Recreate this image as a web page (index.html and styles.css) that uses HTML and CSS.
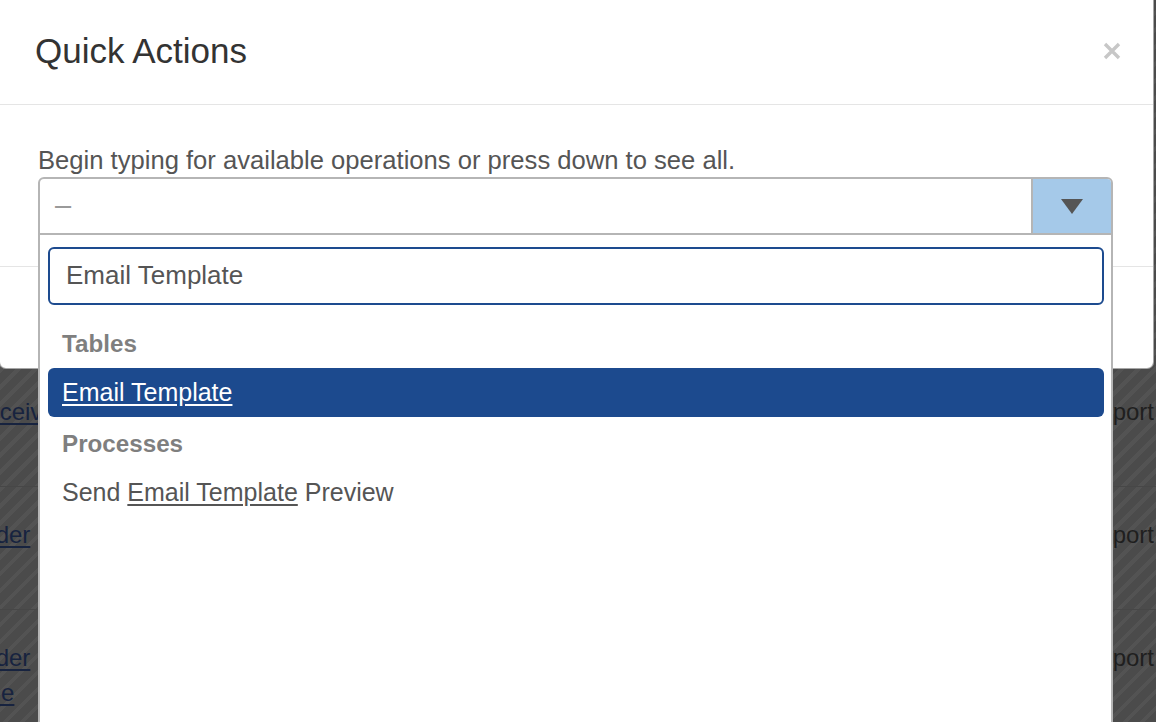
FILE: index.html
```html
<!DOCTYPE html>
<html>
<head>
<meta charset="utf-8">
<title>Quick Actions</title>
<link rel="stylesheet" href="styles.css">
</head>
<body>
<div class="page">
  <div class="row">
    <div class="cell c-left"><a href="#">Receiving</a></div>
    <div class="cell c-mid"></div>
    <div class="cell c-right">Import</div>
  </div>
  <div class="row">
    <div class="cell c-left"><a href="#">Order</a></div>
    <div class="cell c-mid"></div>
    <div class="cell c-right">Import</div>
  </div>
  <div class="row">
    <div class="cell c-left"><a href="#">Order Line</a></div>
    <div class="cell c-mid"></div>
    <div class="cell c-right">Import</div>
  </div>
</div>

<div class="modal">
  <div class="modal-header">
    <h4 class="modal-title">Quick Actions</h4>
    <button class="close" type="button" aria-label="Close">
      <svg width="18" height="18" viewBox="0 0 18 18"><path d="M2 2 L16 16 M16 2 L2 16" stroke="#c7c7c7" stroke-width="3.4" stroke-linecap="butt"/></svg>
    </button>
  </div>
  <div class="modal-body">
    <label class="hint">Begin typing for available operations or press down to see all.</label>
    <div class="combo">
      <div class="combo-value">–</div>
      <div class="combo-btn"><span class="caret"></span></div>
      <div class="menu">
        <div class="search">Email Template</div>
        <div class="group">Tables</div>
        <div class="item active"><span class="match">Email Template</span></div>
        <div class="group">Processes</div>
        <div class="item">Send <span class="match">Email Template</span> Preview</div>
      </div>
    </div>
  </div>
  <div class="modal-footer"></div>
</div>
</body>
</html>
```

FILE: styles.css
```css
* { box-sizing: border-box; }

html, body {
  margin: 0;
  padding: 0;
  width: 1156px;
  height: 722px;
  overflow: hidden;
}

body {
  font-family: "Liberation Sans", Arial, Helvetica, sans-serif;
  background-color: #4c4c4c;
  background-image: repeating-linear-gradient(135deg, #4b4b4b 0 8px, #535353 8px 12px);
  position: relative;
}

/* page behind the backdrop */
.page {
  padding-top: 364px;
  display: flex;
  flex-direction: column;
}
.row {
  display: flex;
  height: 123px;
  border-bottom: 1px solid #474747;
}
.cell {
  padding-top: 30px;
  font-size: 24px;
  line-height: 35px;
}
.c-left {
  margin-left: -31px;
  width: 80px;
}
.c-left a {
  color: #17233f;
  text-decoration: underline;
  text-underline-offset: 3px;
}
.c-mid { flex: 1; }
.c-right {
  width: 70px;
  white-space: nowrap;
  overflow: hidden;
  color: #1f1f1f;
}

/* modal */
.modal {
  position: absolute;
  top: -1px;
  left: -1px;
  width: 1155px;
  background: #fff;
  border: 1px solid rgba(0, 0, 0, 0.35);
  border-radius: 0 0 7px 7px;
  display: flex;
  flex-direction: column;
}
.modal-header {
  height: 105px;
  border-bottom: 1px solid #e5e5e5;
  display: flex;
  align-items: center;
  justify-content: space-between;
  padding: 0 32px 3px 35px;
}
.modal-title {
  margin: 0;
  font-size: 35px;
  font-weight: normal;
  color: #333;
}
.close {
  border: 0;
  background: none;
  padding: 0;
  width: 18px;
  height: 18px;
  display: flex;
}

.modal-body {
  padding: 40px 40px 31px 38px;
}
.hint {
  display: block;
  font-size: 25.6px;
  line-height: 30px;
  color: #555;
  margin-bottom: 2px;
}

.combo {
  position: relative;
  display: flex;
  height: 58px;
  border: 2px solid #b5b5b5;
  border-radius: 6px 6px 0 0;
}
.combo-value {
  flex: 1;
  padding-left: 15px;
  font-size: 29px;
  line-height: 52px;
  color: #9a9a9a;
}
.combo-btn {
  width: 80px;
  background: #a5c9e9;
  border-left: 2px solid #b5b5b5;
  border-top-right-radius: 4px;
  display: flex;
  align-items: center;
  justify-content: center;
}
.caret {
  width: 0;
  height: 0;
  border-left: 11.5px solid transparent;
  border-right: 11.5px solid transparent;
  border-top: 15px solid #555;
  margin-top: 1px;
}

.menu {
  position: absolute;
  top: calc(100% + 2px);
  left: -2px;
  right: -2px;
  height: 520px;
  background: #fff;
  border: 2px solid #b5b5b5;
  border-top: 0;
  padding: 12px 7px 0 8px;
  z-index: 5;
}
.search {
  height: 58px;
  border: 2px solid #1d4b8f;
  border-radius: 6px;
  padding-left: 16px;
  font-size: 26px;
  line-height: 53px;
  color: #555;
  margin-bottom: 14px;
}
.group {
  height: 49px;
  line-height: 49px;
  padding-left: 14px;
  font-size: 24.2px;
  font-weight: bold;
  color: #7f7f7f;
}
.item + .group {
  margin-top: 2px;
}
.item {
  height: 49px;
  line-height: 49px;
  padding-left: 14px;
  font-size: 25px;
  color: #555;
  border-radius: 6px;
}
.match {
  text-decoration: underline;
  text-underline-offset: 3px;
}
.item.active {
  background: #1c4a8e;
  color: #fff;
}

.modal-footer {
  height: 102px;
  border-top: 1px solid #e5e5e5;
}
```
